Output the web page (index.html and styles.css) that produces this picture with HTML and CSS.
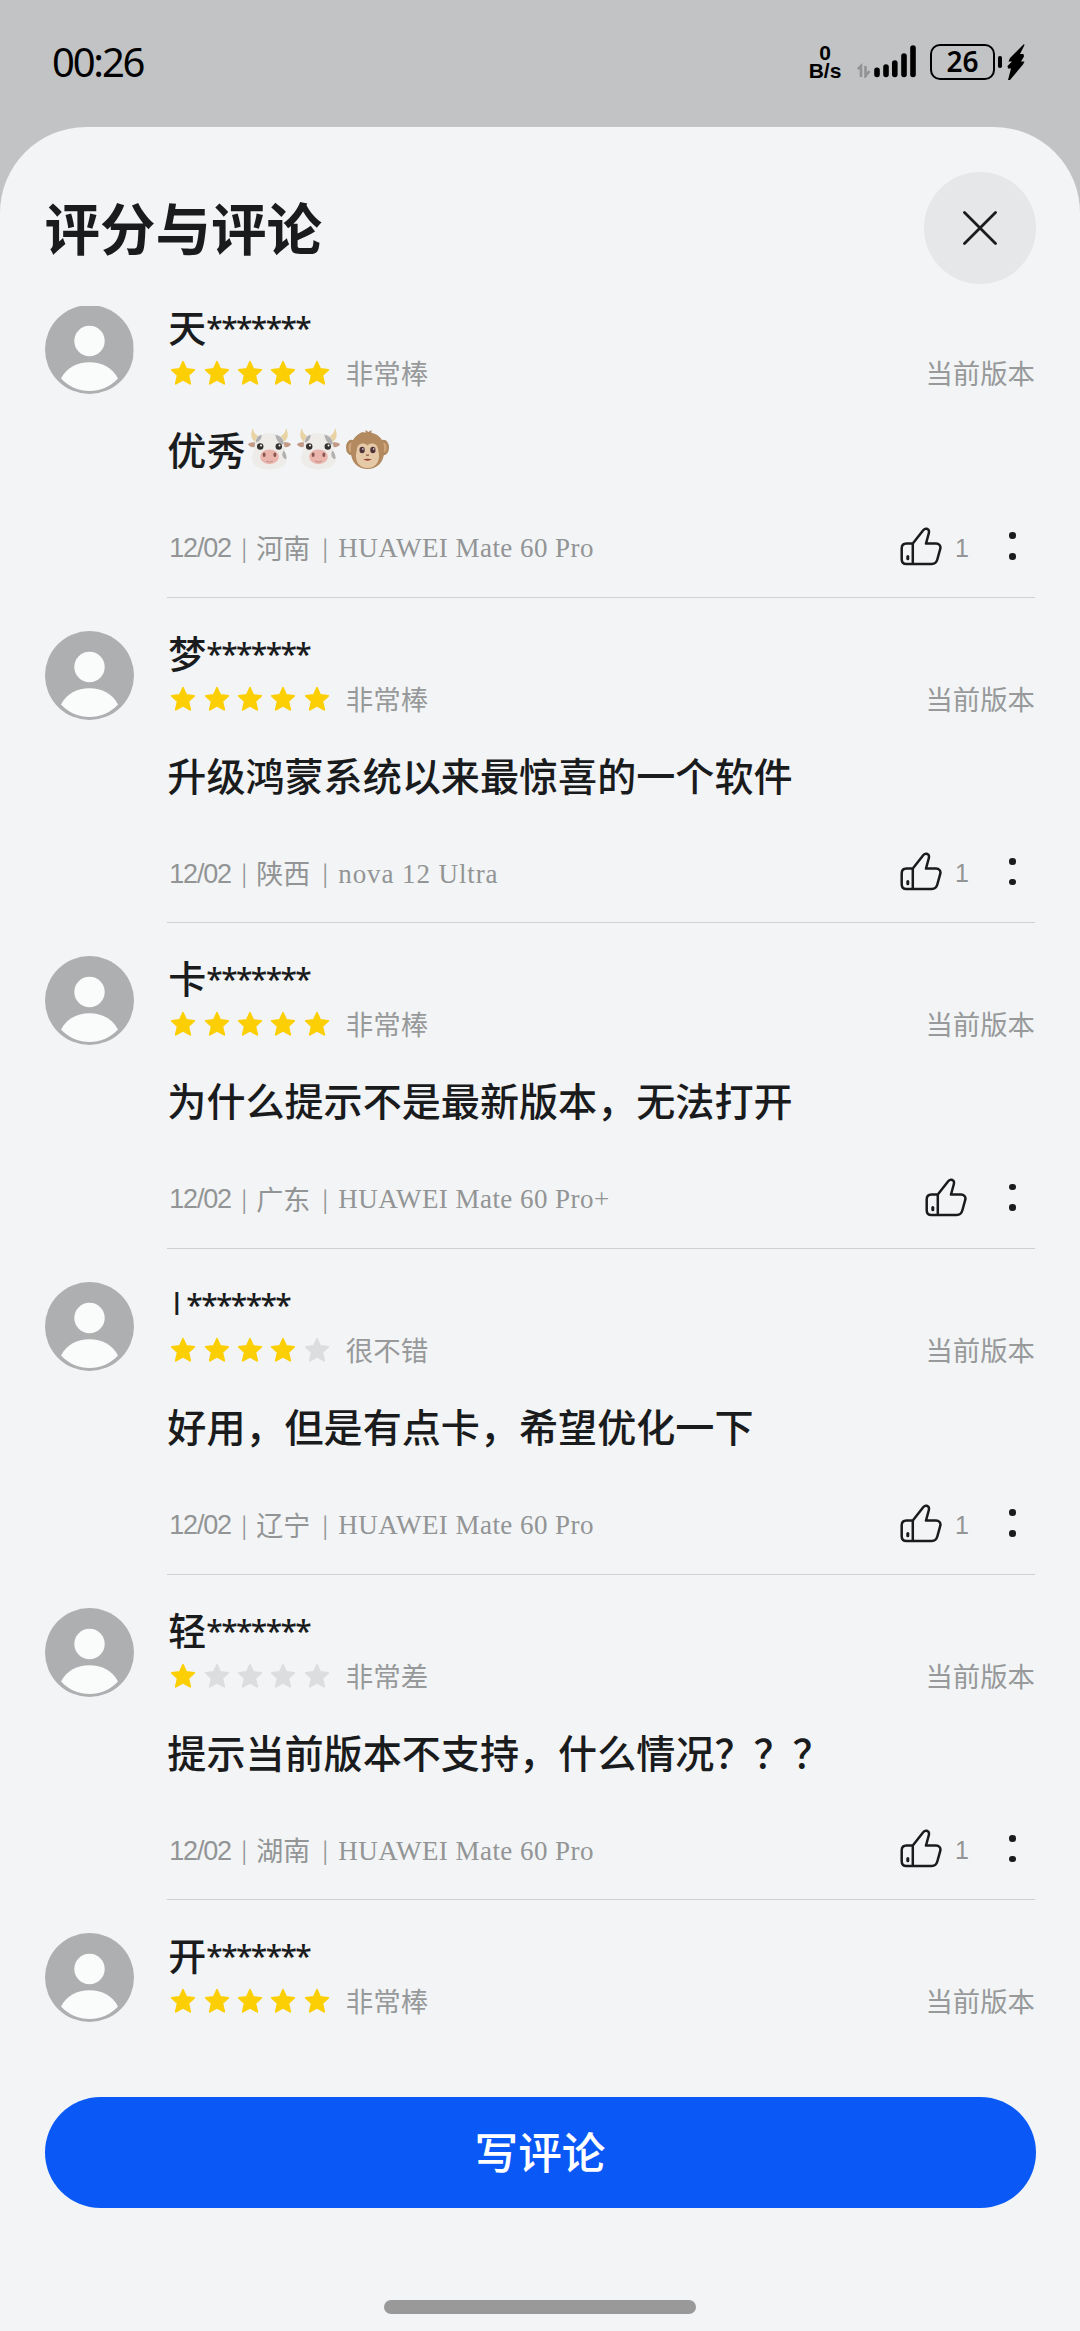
FILE: index.html
```html
<!DOCTYPE html>
<html lang="zh-CN">
<head>
<meta charset="utf-8">
<title>评分与评论</title>
<link rel="stylesheet" href="styles.css">
</head>
<body>
<svg class="defs" aria-hidden="true">
  <symbol id="avatar" viewBox="0 0 89 89">
    <circle cx="44.5" cy="44.5" r="44.5" fill="#adafb0"/>
    <circle cx="44.5" cy="36" r="15.2" fill="#fafbfb"/>
    <path d="M16 73.5C22 62.500 32 57.300 44.500 57.300S67 62.500 73 73.500C65 82 55 86 44.500 86S24 82 16 73.500Z" fill="#fafbfb"/>
  </symbol>
  <symbol id="star" viewBox="0 0 26 26">
    <path d="M13 1.800L16.300 9L24.200 9.900L18.300 15.300L20.200 23.800L13 19.700L5.800 23.800L7.700 15.300L1.800 9.900L9.700 9Z" stroke-width="1.800" stroke-linejoin="round" fill="currentColor" stroke="currentColor"/>
  </symbol>
  <symbol id="thumb" viewBox="0 0 42 39">
    <g fill="none" stroke="#1a1b1c" stroke-width="2.500" stroke-linejoin="round" stroke-linecap="round">
      <path d="M12.800 16.500L23.200 3.300C24.500 1.600 27 1.200 28.300 2.700C29.300 3.800 29.100 5 28.800 6.200L26 16.500H36C39 16.500 41 18.700 40.300 21.700L37.300 32.500C36.500 35.400 34.700 37 31.800 37H6.500C3.500 37 1.700 35.200 1.700 32.200V21.500C1.700 18.300 3.500 16.500 6.500 16.500H12.800V37"/>
      <path d="M7.800 29.600V31.800" stroke-width="3"/>
    </g>
  </symbol>
  <symbol id="cow" viewBox="0 0 44 44">
    <path d="M7 15C2 11 3 6 5 1C6 7 9 10 15 10ZM37 15C42 11 41 6 39 1C38 7 35 10 29 10Z" fill="#e9d3a2"/>
    <path d="M8 16C4 15 1 16 0 18C3 22 7 21 10 19ZM36 16C40 15 43 16 44 18C41 22 37 21 34 19Z" fill="#c29a85"/>
    <path d="M22 6.500C32 6.500 37 10 37 18C37 23 39 27 40 32C40 40 32 43.500 22 43.500S4 40 4 32C5 27 7 23 7 18C7 10 12 6.500 22 6.500Z" fill="#eeece8"/>
    <path d="M28 8C33 9 37 12 36.500 18C32 18 29 14 28 8ZM8 16C8 12 10 9 14 8C14 12 12 15 8 16ZM36.500 24C39 27 40 31 39 33C35 32 34 27 36.500 24Z" fill="#b0afb1"/>
    <ellipse cx="22" cy="30.500" rx="9.500" ry="7.500" fill="#e9b5ac"/>
    <ellipse cx="16.500" cy="28.500" rx="1.500" ry="2.300" fill="#895550"/><ellipse cx="27.500" cy="28.500" rx="1.500" ry="2.300" fill="#895550"/>
    <path d="M18.500 35Q22 36.500 25.500 35" stroke="#c08f87" fill="none"/>
    <circle cx="12.500" cy="20" r="3.300" fill="#33302d"/><circle cx="31.500" cy="20" r="3.300" fill="#33302d"/>
    <circle cx="13.300" cy="19" r="1" fill="#fff"/><circle cx="32.300" cy="19" r="1" fill="#fff"/>
  </symbol>
  <symbol id="monkey" viewBox="0 0 44 44">
    <ellipse cx="5.500" cy="21" rx="5.500" ry="8" fill="#b08860"/><ellipse cx="38.500" cy="21" rx="5.500" ry="8" fill="#b08860"/>
    <ellipse cx="5.500" cy="21" rx="3" ry="5" fill="#cfa57b"/><ellipse cx="38.500" cy="21" rx="3" ry="5" fill="#cfa57b"/>
    <path d="M17 5L20 6L20 3L23 5L26 3L26 6C35 8 40 15 39 25C39 36 32 43 22 43S5 36 5 25C4 15 9 8 17 5Z" fill="#b38a60"/>
    <path d="M22 19C18 15 11 17 11 24C8 34 13 42 22 42S36 34 33 24C33 17 26 15 22 19Z" fill="#e6c9a6"/>
    <ellipse cx="16.500" cy="23.500" rx="2.700" ry="3.300" fill="#50333a"/><ellipse cx="27.500" cy="23.500" rx="2.700" ry="3.300" fill="#50333a"/>
    <circle cx="17.300" cy="22.500" r=".8" fill="#fff"/><circle cx="28.300" cy="22.500" r=".8" fill="#fff"/>
    <path d="M20.500 28.500L22 29L23.500 28.500" stroke="#936247" stroke-width="1.200" fill="none"/>
    <path d="M17.500 33Q22 32 26.500 33Q22 36 17.500 33Z" fill="#963f38"/>
  </symbol>
</svg>

<header class="status">
  <span class="clock">00:26</span>
  <div class="status-right">
    <div class="net"><span>0</span><span>B/s</span></div>
    <svg class="signal" viewBox="0 0 60 34">
      <g fill="none" stroke="#919394" stroke-width="2.600"><path d="M.8 25L4 22V33M8.500 22V32L12.500 27"/></g>
      <g stroke="#000" stroke-width="5.600" stroke-linecap="round"><path d="M20 26.200V30.500M29 23V30.500M37.800 19V30.500M47 12V30.500M56 4V30.500"/></g>
    </svg>
    <div class="battery"><span class="level">26</span></div>
    <svg class="charge" viewBox="0 0 27 36"><rect y="12" width="4" height="12" rx="1.800"/><path d="M26 0L12 14L10.500 17.500H14L9.500 22L10 24.500H13L10 36H12L25 20.500L26.500 17.500H23L26 12.500L25.500 10H22L26.500 1Z"/></svg>
  </div>
</header>

<main class="sheet">
  <div class="sheet-head">
    <h1>评分与评论</h1>
    <button class="close" aria-label="关闭"><svg viewBox="0 0 34 34"><path d="M1.500 1.500L32.500 32.500M32.500 1.500L1.500 32.500" stroke="#1a1b1c" stroke-width="2.800" stroke-linecap="round"/></svg></button>
  </div>

  <section class="list">
    <article class="review">
      <svg class="avatar"><use href="#avatar"/></svg>
      <div class="content">
        <div class="name">天<span class="mask">*******</span></div>
        <div class="rating"><span class="stars"><svg><use href="#star"/></svg><svg><use href="#star"/></svg><svg><use href="#star"/></svg><svg><use href="#star"/></svg><svg><use href="#star"/></svg></span><span class="verdict">非常棒</span><span class="version">当前版本</span></div>
        <p class="text">优秀<svg class="emoji"><use href="#cow"/></svg><svg class="emoji"><use href="#cow"/></svg><svg class="emoji"><use href="#monkey"/></svg></p>
        <div class="meta"><span class="date">12/02</span><span class="bar">|</span><span class="place">河南</span><span class="bar">|</span><span class="device">HUAWEI Mate 60 Pro</span><span class="actions"><svg class="thumb"><use href="#thumb"/></svg><span class="count">1</span><span class="more"><i></i><i></i></span></span></div>
      </div>
    </article>
    <article class="review">
      <svg class="avatar"><use href="#avatar"/></svg>
      <div class="content">
        <div class="name">梦<span class="mask">*******</span></div>
        <div class="rating"><span class="stars"><svg><use href="#star"/></svg><svg><use href="#star"/></svg><svg><use href="#star"/></svg><svg><use href="#star"/></svg><svg><use href="#star"/></svg></span><span class="verdict">非常棒</span><span class="version">当前版本</span></div>
        <p class="text">升级鸿蒙系统以来最惊喜的一个软件</p>
        <div class="meta"><span class="date">12/02</span><span class="bar">|</span><span class="place">陕西</span><span class="bar">|</span><span class="device nova">nova 12 Ultra</span><span class="actions"><svg class="thumb"><use href="#thumb"/></svg><span class="count">1</span><span class="more"><i></i><i></i></span></span></div>
      </div>
    </article>
    <article class="review">
      <svg class="avatar"><use href="#avatar"/></svg>
      <div class="content">
        <div class="name">卡<span class="mask">*******</span></div>
        <div class="rating"><span class="stars"><svg><use href="#star"/></svg><svg><use href="#star"/></svg><svg><use href="#star"/></svg><svg><use href="#star"/></svg><svg><use href="#star"/></svg></span><span class="verdict">非常棒</span><span class="version">当前版本</span></div>
        <p class="text">为什么提示不是最新版本，无法打开</p>
        <div class="meta"><span class="date">12/02</span><span class="bar">|</span><span class="place">广东</span><span class="bar">|</span><span class="device">HUAWEI Mate 60 Pro+</span><span class="actions"><svg class="thumb"><use href="#thumb"/></svg><span class="more"><i></i><i></i></span></span></div>
      </div>
    </article>
    <article class="review">
      <svg class="avatar"><use href="#avatar"/></svg>
      <div class="content">
        <div class="name"><span class="initial">l</span><span class="mask">*******</span></div>
        <div class="rating"><span class="stars"><svg><use href="#star"/></svg><svg><use href="#star"/></svg><svg><use href="#star"/></svg><svg><use href="#star"/></svg><svg class="off"><use href="#star"/></svg></span><span class="verdict">很不错</span><span class="version">当前版本</span></div>
        <p class="text">好用，但是有点卡，希望优化一下</p>
        <div class="meta"><span class="date">12/02</span><span class="bar">|</span><span class="place">辽宁</span><span class="bar">|</span><span class="device">HUAWEI Mate 60 Pro</span><span class="actions"><svg class="thumb"><use href="#thumb"/></svg><span class="count">1</span><span class="more"><i></i><i></i></span></span></div>
      </div>
    </article>
    <article class="review">
      <svg class="avatar"><use href="#avatar"/></svg>
      <div class="content">
        <div class="name">轻<span class="mask">*******</span></div>
        <div class="rating"><span class="stars"><svg><use href="#star"/></svg><svg class="off"><use href="#star"/></svg><svg class="off"><use href="#star"/></svg><svg class="off"><use href="#star"/></svg><svg class="off"><use href="#star"/></svg></span><span class="verdict">非常差</span><span class="version">当前版本</span></div>
        <p class="text">提示当前版本不支持，什么情况？？？</p>
        <div class="meta"><span class="date">12/02</span><span class="bar">|</span><span class="place">湖南</span><span class="bar">|</span><span class="device">HUAWEI Mate 60 Pro</span><span class="actions"><svg class="thumb"><use href="#thumb"/></svg><span class="count">1</span><span class="more"><i></i><i></i></span></span></div>
      </div>
    </article>
    <article class="review">
      <svg class="avatar"><use href="#avatar"/></svg>
      <div class="content last">
        <div class="name">开<span class="mask">*******</span></div>
        <div class="rating"><span class="stars"><svg><use href="#star"/></svg><svg><use href="#star"/></svg><svg><use href="#star"/></svg><svg><use href="#star"/></svg><svg><use href="#star"/></svg></span><span class="verdict">非常棒</span><span class="version">当前版本</span></div>
      </div>
    </article>
  </section>

  <footer class="foot">
    <button class="write">写评论</button>
    <div class="home"></div>
  </footer>
</main>
</body>
</html>
```
FILE: styles.css
```css
* { box-sizing: border-box; }
body {
  margin: 0;
  width: 1080px;
  height: 2331px;
  display: flex;
  flex-direction: column;
  overflow: hidden;
  background: #c1c3c4;
  color: #1a1b1c;
  font-family: "Noto Sans CJK SC", sans-serif;
}
svg { display: block; flex: none; }
.defs { position: absolute; width: 0; height: 0; }
button { border: 0; padding: 0; font-family: inherit; }

.status {
  height: 127px;
  flex: none;
  display: flex;
  justify-content: space-between;
  align-items: flex-start;
  padding: 44px 55px 0 52px;
  color: #000;
}
.clock {
  font: 400 40px/36px "Noto Sans", sans-serif;
  letter-spacing: -2.2px;
}
.status-right { display: flex; height: 36px; }
.net {
  width: 34px;
  margin-right: 15px;
  display: flex;
  flex-direction: column;
  align-items: center;
  font: 600 21px/20px "Liberation Sans", sans-serif;
}
.net span:first-child { line-height: 17px; }
.signal { width: 60px; height: 34px; }
.battery {
  width: 65px;
  height: 36px;
  margin-left: 13px;
  border: 2.6px solid #000;
  border-radius: 10px;
  text-align: center;
}
.level { font: 600 28px/31px "Noto Sans", sans-serif; }
.charge { width: 27px; height: 36px; margin-left: 3px; }

.sheet {
  flex: 1;
  min-height: 0;
  display: flex;
  flex-direction: column;
  padding: 45px 44.5px 0;
  border-radius: 86px 86px 0 0;
  background: #f2f4f6;
}
.sheet-head {
  height: 134px;
  flex: none;
  display: flex;
  justify-content: space-between;
  align-items: flex-start;
}
h1 { margin: 0; font-size: 55.5px; line-height: 108px; font-weight: 700; }
.close {
  width: 112px;
  height: 112px;
  border-radius: 50%;
  background: #e5e7e8;
  display: grid;
  place-items: center;
}
.close svg { width: 34px; height: 34px; }

.list { height: 1791px; flex: none; }
.review { display: flex; gap: 33.8px; height: 325.7px; }
.review:first-child { margin-top: -1px; }
.review:first-child .avatar { clip-path: inset(1px 0 0 0); }
.avatar { width: 89px; height: 89px; }
.content {
  width: 867.7px;
  height: 292.5px;
  border-bottom: 1.5px solid #ced0d2;
}
.content.last { border: 0; }
.name {
  height: 48px;
  padding-left: 1px;
  font-size: 38px;
  line-height: 42px;
  font-weight: 500;
  display: flex;
}
.mask { font-family: "Noto Sans", sans-serif; font-size: 30px; line-height: 46px; letter-spacing: -1.6px; }
.initial { width: 18px; padding-left: 5px; font: 400 32px/45px "Liberation Sans", sans-serif; }
.rating { height: 40px; display: flex; align-items: center; color: #97999a; font-size: 27.5px; line-height: 38px; }
.stars { display: flex; gap: 7.4px; padding-left: 3px; color: #fccf04; }
.stars svg { width: 26px; height: 26px; }
.stars .off { color: #dcdddf; }
.verdict { margin: -2px 0 0 16px; }
.version { margin: -2px 0 0 auto; font-size: 27.4px; }
.text {
  margin: 29px 0 0;
  height: 52px;
  display: flex;
  align-items: center;
  font-size: 39.1px;
  line-height: 52px;
  font-weight: 500;
}
.emoji { width: 43px; height: 43px; margin: 0 3px 0 2.8px; }
.meta {
  margin-top: 54px;
  height: 40px;
  display: flex;
  align-items: center;
  padding-left: 2px;
  color: #929495;
  font-size: 27px;
  line-height: 38px;
}
.date { width: 63px; font-family: "Liberation Sans", sans-serif; letter-spacing: -1.2px; }
.bar { width: 24px; margin-top: -3px; text-align: center; font-size: 22px; }
.place { width: 57px; margin-top: -1px; }
.device { margin-left: 1px; font-family: "Liberation Serif", serif; letter-spacing: 0.45px; }
.nova { letter-spacing: 0.9px; }
.actions { margin: -4px 0 0 auto; display: flex; align-items: center; }
.thumb { width: 42px; height: 39px; }
.count { width: 25px; padding: 3px 0 0 13px; font: 25px/38px "Liberation Sans", sans-serif; }
.more { width: 68px; padding-left: 42.5px; display: flex; flex-direction: column; gap: 14px; }
.more i { width: 6.6px; height: 6.6px; border-radius: 50%; background: #1a1b1c; }

.foot { flex: 1; display: flex; flex-direction: column; align-items: center; }
.write {
  width: 991px;
  height: 111px;
  padding-bottom: 5px;
  border-radius: 56px;
  background: #0a59f7;
  color: #fff;
  font-size: 43.6px;
  font-weight: 500;
}
.home { width: 312px; height: 14px; margin-top: 92px; border-radius: 7px; background: #999; }
```
